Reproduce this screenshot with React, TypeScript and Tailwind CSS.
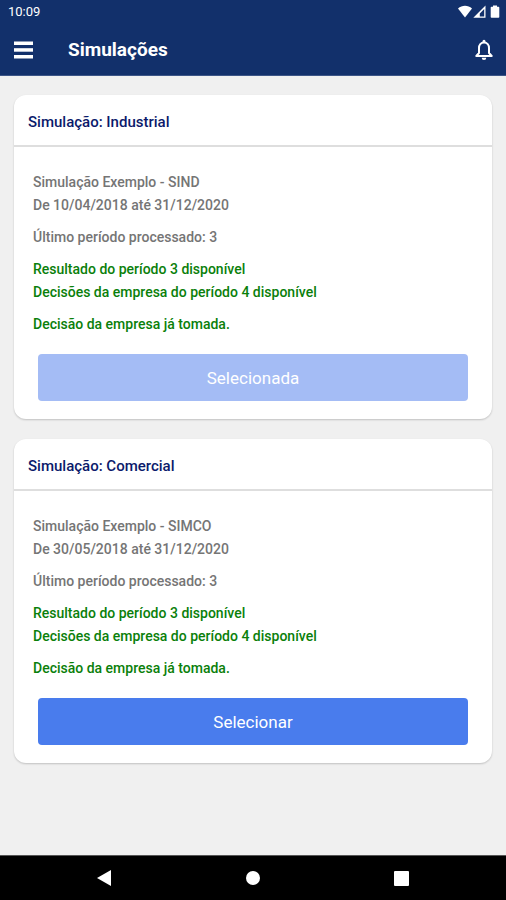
import React from "react";

interface Simulation {
  kind: string;
  name: string;
  period: string;
  lastPeriod: number;
  nextPeriod: number;
  selected: boolean;
}

const simulations: Simulation[] = [
  {
    kind: "Industrial",
    name: "Simulação Exemplo - SIND",
    period: "De 10/04/2018 até 31/12/2020",
    lastPeriod: 3,
    nextPeriod: 4,
    selected: true,
  },
  {
    kind: "Comercial",
    name: "Simulação Exemplo - SIMCO",
    period: "De 30/05/2018 até 31/12/2020",
    lastPeriod: 3,
    nextPeriod: 4,
    selected: false,
  },
];

export default function App() {
  return (
    <div className="flex min-h-screen flex-col bg-[#f0f0f0] font-['Roboto',sans-serif]">
      <header className="border-b border-[#3c5587] bg-[#12306b] text-white">
        <StatusBar />
        <div className="flex h-[51px] items-center pr-3 pl-[14px]">
          <button type="button" aria-label="Menu">
            <MenuIcon />
          </button>
          <h1 className="ml-[34px] flex-1 text-[19px] leading-6 font-bold">Simulações</h1>
          <button type="button" aria-label="Notificações">
            <BellIcon />
          </button>
        </div>
      </header>

      <main className="flex flex-1 flex-col gap-5 px-[14px] pt-[19px] pb-5">
        {simulations.map((simulation) => (
          <SimulationCard key={simulation.kind} simulation={simulation} />
        ))}
      </main>

      <NavigationBar />
    </div>
  );
}

// Helper Components
const SimulationCard = ({ simulation }: { simulation: Simulation }) => (
  <section className="rounded-xl bg-white shadow-[0_1px_2px_rgba(0,0,0,0.2)]">
    <h2 className="border-b-2 border-[#dedede] px-[14px] pt-[15px] pb-[11px] text-[15px] leading-6 font-medium text-[#0b1a6b]">
      Simulação: {simulation.kind}
    </h2>
    <div className="px-[19px] pt-6 pb-[18px] text-sm leading-[23px] font-medium text-[#757575]">
      <p>{simulation.name}</p>
      <p>{simulation.period}</p>
      <p className="mt-[9px]">Último período processado: {simulation.lastPeriod}</p>
      <div className="mt-[9px] text-[#0a800a]">
        <p>Resultado do período {simulation.lastPeriod} disponível</p>
        <p>Decisões da empresa do período {simulation.nextPeriod} disponível</p>
        <p className="mt-[9px]">Decisão da empresa já tomada.</p>
      </div>
      <div className="mt-[18px] px-[5px]">
        <button
          type="button"
          disabled={simulation.selected}
          className="h-[47px] w-full rounded bg-[#497ced] pt-[2px] text-[17px] font-normal text-white disabled:bg-[#a4bcf5]"
        >
          {simulation.selected ? "Selecionada" : "Selecionar"}
        </button>
      </div>
    </div>
  </section>
);

const StatusBar = () => (
  <div className="flex h-6 items-center justify-between pr-[6px] pl-2">
    <span className="text-[13px] leading-6">10:09</span>
    <svg width="42" height="14" viewBox="0 0 42 14" fill="currentColor" aria-hidden="true">
      <path d="M0 3.6C4-.2 10-.2 14 3.6L7 12.500z" />
      <path fillRule="evenodd" d="M27.500.5v12.200H15.300zM26.200 4l-4.400 4.500v2.900h4.400z" />
      <path d="M33.500 1.800H35V.6h4v1.200h1.500q.8 0 .8.8v9.400q0 .8-.8.8h-7q-.8 0-.8-.8V2.600q0-.8.8-.8z" />
    </svg>
  </div>
);

const MenuIcon = () => (
  <svg width="20" height="18" viewBox="0 0 20 18" fill="currentColor" aria-hidden="true">
    <rect width="19" height="3.500" y=".5" />
    <rect width="19" height="3.500" y="7.200" />
    <rect width="19" height="3.500" y="14" />
  </svg>
);

const BellIcon = () => (
  <svg width="20" height="22" viewBox="0 0 20 22" fill="none" aria-hidden="true">
    <path
      d="M10 3.500c-3.200 0-5 2.500-5 5.500v5l-2.700 3h15.400L15 14V9c0-3-1.800-5.500-5-5.500z"
      stroke="currentColor"
      strokeWidth="2"
      strokeLinejoin="round"
    />
    <path d="M8.500 3.200V2.300a1.500 1.500 0 0 1 3 0v.9zM7.700 18.800h4.600a2.300 2.300 0 0 1-4.600 0z" fill="currentColor" />
  </svg>
);

const NavigationBar = () => (
  <nav className="grid h-[45px] grid-cols-3 items-center justify-items-center border-t border-[#555] bg-black px-[30px] text-white">
    <button type="button" aria-label="Voltar">
      <svg width="14" height="16" viewBox="0 0 14 16" fill="currentColor">
        <path d="M14 0v16L0 8z" />
      </svg>
    </button>
    <button type="button" aria-label="Início">
      <svg width="14" height="14" viewBox="0 0 14 14" fill="currentColor">
        <circle cx="7" cy="7" r="7" />
      </svg>
    </button>
    <button type="button" aria-label="Recentes">
      <svg width="15" height="15" viewBox="0 0 15 15" fill="currentColor">
        <rect width="15" height="15" rx="1" />
      </svg>
    </button>
  </nav>
);
